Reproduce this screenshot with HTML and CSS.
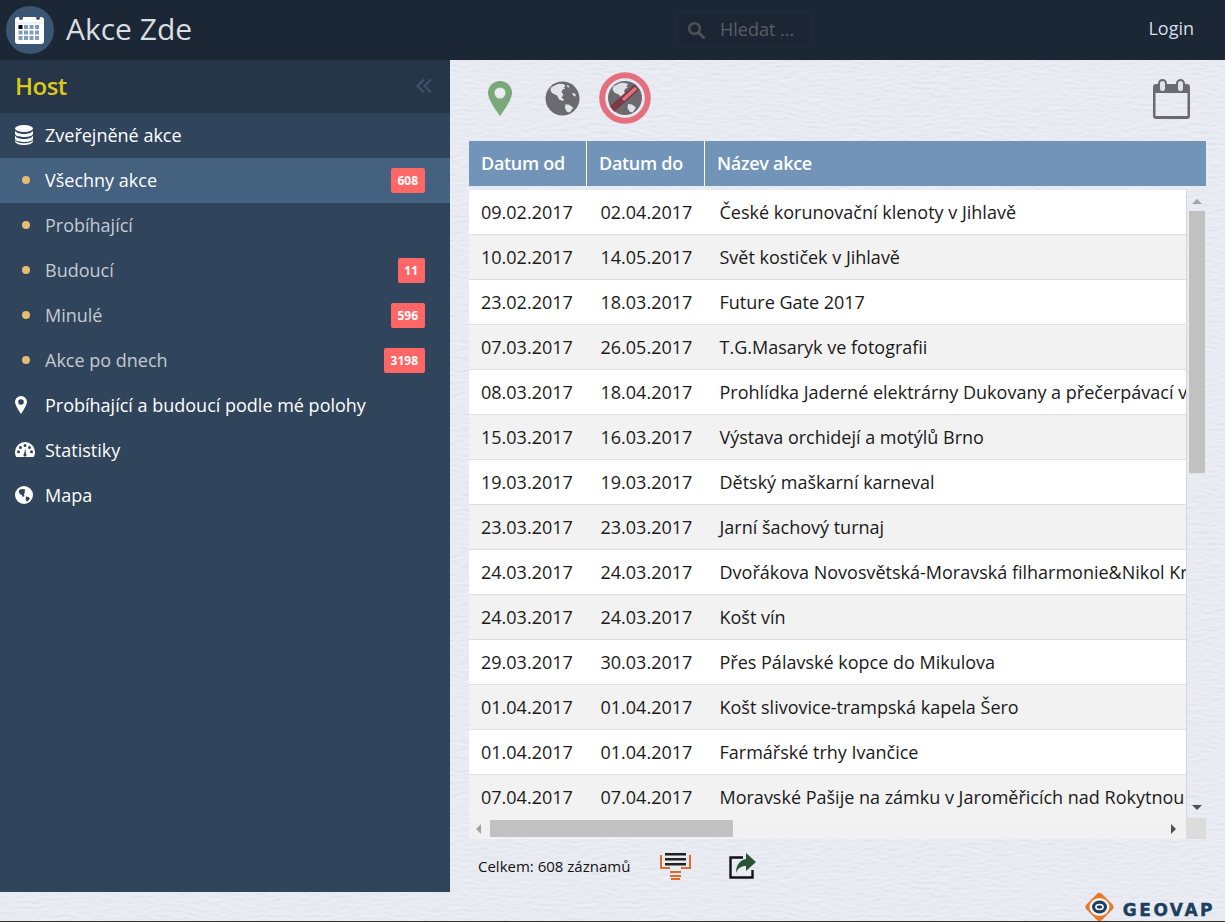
FILE: index.html
```html
<!DOCTYPE html>
<html lang="cs">
<head>
<meta charset="utf-8">
<title>Akce Zde</title>
<link rel="stylesheet" href="styles.css">
</head>
<body>
<header class="topbar">
  <div class="brand">
    <span class="brand-logo">
      <svg width="32" height="32" viewBox="0 0 32 32">
        <rect x="1" y="3" width="29" height="27" rx="3" fill="#fff"/>
        <path d="M1 9h29" stroke="#dfe4ea" stroke-width="1"/>
        <circle cx="7" cy="4" r="2" fill="#3b5673"/><circle cx="24" cy="4" r="2" fill="#3b5673"/>
        <rect x="6.500" y="1" width="1" height="4" fill="#3b5673"/><rect x="23.500" y="1" width="1" height="4" fill="#3b5673"/>
        <g fill="#7e9dbd">
          <rect x="10" y="11" width="4" height="4"/><rect x="15.500" y="11" width="4" height="4"/><rect x="21" y="11" width="4" height="4"/>
          <rect x="4.500" y="16.500" width="4" height="4"/><rect x="10" y="16.500" width="4" height="4"/><rect x="15.500" y="16.500" width="4" height="4"/><rect x="21" y="16.500" width="4" height="4"/>
          <rect x="4.500" y="22" width="4" height="4"/><rect x="10" y="22" width="4" height="4"/><rect x="15.500" y="22" width="4" height="4"/><rect x="21" y="22" width="4" height="4"/>
        </g>
        <rect x="4.500" y="11" width="4" height="4" fill="#000"/>
      </svg>
    </span>
    <span class="brand-name">Akce Zde</span>
  </div>
  <div class="search">
    <svg class="search-icon" width="18" height="18" viewBox="0 0 18 18"><circle cx="7.500" cy="7.500" r="5.300" fill="none" stroke="#4d5155" stroke-width="2.600"/><path d="M11.500 11.500l5 5" stroke="#4d5155" stroke-width="3" stroke-linecap="round"/></svg>
    <span class="search-text">Hledat ...</span>
  </div>
  <a class="login">Login</a>
</header>

<div class="shell">
  <aside class="sidebar">
    <div class="side-head">
      <span class="side-title">Host</span>
      <svg width="18" height="16" viewBox="0 0 18 16"><path d="M9 1.500L2.500 8 9 14.500M16 1.500L9.500 8 16 14.500" fill="none" stroke="#3f5069" stroke-width="2.200"/></svg>
    </div>
    <nav class="menu">
      <div class="item top">
        <span class="ico"><svg width="18" height="20" viewBox="0 0 18 20"><g fill="#fff"><ellipse cx="9" cy="3.500" rx="9" ry="3.500"/><path d="M0 5.500C1 8 5 9 9 9s8-1 9-3.500V9c-1 2.200-5 3-9 3S1 11.200 0 9z"/><path d="M0 10.500C1 13 5 14 9 14s8-1 9-3.500V14c-1 2.200-5 3-9 3s-8-.8-9-3z"/><path d="M0 15c1 2.500 5 3.200 9 3.200S17 17.500 18 15v1.500c-1 2.500-5 3.500-9 3.500s-8-1-9-3.500z"/></g></svg></span>
        <span class="label">Zveřejněné akce</span>
      </div>
      <div class="item sub active"><span class="ico"><i class="dot"></i></span><span class="label">Všechny akce</span><span class="badge">608</span></div>
      <div class="item sub"><span class="ico"><i class="dot"></i></span><span class="label">Probíhající</span></div>
      <div class="item sub"><span class="ico"><i class="dot"></i></span><span class="label">Budoucí</span><span class="badge">11</span></div>
      <div class="item sub"><span class="ico"><i class="dot"></i></span><span class="label">Minulé</span><span class="badge">596</span></div>
      <div class="item sub"><span class="ico"><i class="dot"></i></span><span class="label">Akce po dnech</span><span class="badge">3198</span></div>
      <div class="item top">
        <span class="ico"><svg width="12" height="18" viewBox="0 0 12 18"><path fill="#fff" fill-rule="evenodd" d="M6 0a6 6 0 0 1 6 6c0 2.300-3.500 8.500-6 12C3.500 14.500 0 8.300 0 6a6 6 0 0 1 6-6zm0 3.200a2.800 2.800 0 1 0 0 5.600 2.800 2.800 0 0 0 0-5.600z"/></svg></span>
        <span class="label">Probíhající a budoucí podle mé polohy</span>
      </div>
      <div class="item top">
        <span class="ico"><svg width="20" height="17" viewBox="0 0 20 17"><path fill="#fff" d="M10 1a10 10 0 0 1 10 10c0 2-.5 3.700-1.400 5H1.400C.5 14.700 0 13 0 11A10 10 0 0 1 10 1z"/><g fill="#30445c"><circle cx="10" cy="4.500" r="1.500"/><circle cx="5.500" cy="6.500" r="1.500"/><circle cx="3.500" cy="10.800" r="1.500"/><circle cx="16.500" cy="10.800" r="1.500"/><circle cx="14.500" cy="6.500" r="1.500"/><path d="M9 14l1.200-7 1 7z"/><circle cx="10" cy="14" r="1.600"/></g></svg></span>
        <span class="label">Statistiky</span>
      </div>
      <div class="item top">
        <span class="ico"><svg width="18" height="18" viewBox="0 0 18 18"><circle cx="9" cy="9" r="9" fill="#fff"/><path fill="#30445c" d="M5 3.500c2-.8 3.500-.6 5 0 .8.700 0 1.500-.6 1.600l.6 1.400-1 1.500.4 1.800-1.600 1.400L7 9 5 8.200 3.800 6 4 4.500zM11 10.500l2.500.5 1.500 1.500-2.500 3-1.500-.6-.3-2.400z"/></svg></span>
        <span class="label">Mapa</span>
      </div>
    </nav>
  </aside>

  <main class="content">
    <div class="toolbar">
      <div class="tools">
        <span class="tool">
          <svg width="24" height="35" viewBox="0 0 24 35"><path fill="#7aa878" fill-rule="evenodd" d="M12 0a12 12 0 0 1 12 12c0 6-7.500 17-12 23C7.500 29 0 18 0 12A12 12 0 0 1 12 0zm0 6.500a5.500 5.500 0 1 0 0 11 5.500 5.500 0 0 0 0-11z"/></svg>
        </span>
        <span class="tool">
          <svg width="35" height="35" viewBox="0 0 36 36"><circle cx="18" cy="18" r="17.500" fill="#6b6b6f"/><path fill="#e2e4ea" d="M11 4c3-1.500 6-1.500 9-.5 1.500 1 .5 2.500-1 3l2 1-3 1.500-1 2.500 2 2.500-2 3.500 2.500 1-1 2-4-1.500-2-4-5-2.500-2-3 1-3zM22 4l3 1-1 2.500zM21 24l4 .5 4 3-3.500 5-3-1-2-3.500zM28 12l3 1 1 3-3-1z"/></svg>
        </span>
        <span class="tool tool-off">
          <svg width="52" height="52" viewBox="0 0 52 52"><circle cx="26" cy="26" r="22.800" fill="none" stroke="#e4707f" stroke-width="6"/><circle cx="26" cy="26" r="17" fill="#6b6b6f"/><path fill="#dfe1e8" d="M19 12c3-1.500 6-1.500 9-.5 1.500 1 .5 2.500-1 3l2 1-3 1.500-1 2.500 2 2.500-2 3.500 2.500 1-1 2-4-1.500-2-4-5-2.500-2-3 1-3zM29 32l4 .5 4 3-3.500 5-3-1-2-3.500z"/><path d="M13 37L38 15" stroke="#7c3a47" stroke-width="7"/><path d="M24 28L37 16" stroke="#e4707f" stroke-width="3.500"/></svg>
        </span>
      </div>
      <span class="tool-cal">
        <svg width="37" height="40" viewBox="0 0 37 40"><path fill="#6b6b6f" fill-rule="evenodd" d="M3 5h31a3 3 0 0 1 3 3v29a3 3 0 0 1-3 3H3a3 3 0 0 1-3-3V8a3 3 0 0 1 3-3zm-.500 9v23h32V14z"/><rect x="6" y="1" width="7" height="12" rx="3.500" fill="#e0e2ea" stroke="#6b6b6f" stroke-width="2"/><rect x="24" y="1" width="7" height="12" rx="3.500" fill="#e0e2ea" stroke="#6b6b6f" stroke-width="2"/></svg>
      </span>
    </div>

    <div class="thead">
      <div class="th th-a">Datum od</div>
      <div class="th th-b">Datum do</div>
      <div class="th th-c">Název akce</div>
    </div>

    <div class="grid">
      <div class="grid-main">
        <div class="rows">
          <div class="row"><span class="c1">09.02.2017</span><span class="c2">02.04.2017</span><span class="c3">České korunovační klenoty v Jihlavě</span></div>
          <div class="row"><span class="c1">10.02.2017</span><span class="c2">14.05.2017</span><span class="c3">Svět kostiček v Jihlavě</span></div>
          <div class="row"><span class="c1">23.02.2017</span><span class="c2">18.03.2017</span><span class="c3">Future Gate 2017</span></div>
          <div class="row"><span class="c1">07.03.2017</span><span class="c2">26.05.2017</span><span class="c3">T.G.Masaryk ve fotografii</span></div>
          <div class="row"><span class="c1">08.03.2017</span><span class="c2">18.04.2017</span><span class="c3">Prohlídka Jaderné elektrárny Dukovany a přečerpávací vodní elektrárny Dalešice</span></div>
          <div class="row"><span class="c1">15.03.2017</span><span class="c2">16.03.2017</span><span class="c3">Výstava orchidejí a motýlů Brno</span></div>
          <div class="row"><span class="c1">19.03.2017</span><span class="c2">19.03.2017</span><span class="c3">Dětský maškarní karneval</span></div>
          <div class="row"><span class="c1">23.03.2017</span><span class="c2">23.03.2017</span><span class="c3">Jarní šachový turnaj</span></div>
          <div class="row"><span class="c1">24.03.2017</span><span class="c2">24.03.2017</span><span class="c3">Dvořákova Novosvětská-Moravská filharmonie&amp;Nikol Kroupová</span></div>
          <div class="row"><span class="c1">24.03.2017</span><span class="c2">24.03.2017</span><span class="c3">Košt vín</span></div>
          <div class="row"><span class="c1">29.03.2017</span><span class="c2">30.03.2017</span><span class="c3">Přes Pálavské kopce do Mikulova</span></div>
          <div class="row"><span class="c1">01.04.2017</span><span class="c2">01.04.2017</span><span class="c3">Košt slivovice-trampská kapela Šero</span></div>
          <div class="row"><span class="c1">01.04.2017</span><span class="c2">01.04.2017</span><span class="c3">Farmářské trhy Ivančice</span></div>
          <div class="row"><span class="c1">07.04.2017</span><span class="c2">07.04.2017</span><span class="c3">Moravské Pašije na zámku v Jaroměřicích nad Rokytnou</span></div>
        </div>
        <div class="vbar">
          <i class="arrow up"></i>
          <div class="vtrack"><div class="vthumb"></div></div>
          <i class="arrow down"></i>
        </div>
      </div>
      <div class="grid-foot">
        <div class="hbar">
          <i class="arrow left"></i>
          <div class="htrack"><div class="hthumb"></div></div>
          <i class="arrow right"></i>
        </div>
        <div class="corner"></div>
      </div>
    </div>

    <div class="summary">
      <span class="total">Celkem: 608 záznamů</span>
      <svg class="sum-list" width="31" height="28" viewBox="0 0 31 28"><g fill="#e06a28"><path d="M0 3h2v12h8v2H0zM29 3h2v14H21v-2h8z"/><rect x="10" y="19" width="11" height="2"/><rect x="10" y="23" width="11" height="2"/><rect x="11" y="26" width="9" height="2"/></g><g fill="#222"><rect x="5" y="1" width="21" height="2.500"/><rect x="5" y="6" width="21" height="2.500"/><rect x="5" y="11" width="21" height="2.500"/></g></svg>
      <svg class="sum-share" width="28" height="26" viewBox="0 0 28 26"><path fill="none" stroke="#111" stroke-width="2.400" d="M14 4.500H1.500v20h22V17"/><path fill="#2c5235" d="M17 0l10 9-10 9v-5c-5 0-8 2-10 7 0-8 4-13 10-14z"/></svg>
    </div>
  </main>
</div>

<footer class="footer">
  <svg width="31" height="30" viewBox="0 0 31 30"><g transform="rotate(45 15.500 15)"><rect x="4.500" y="4" width="22" height="22" rx="4" fill="#e8792a"/></g><ellipse cx="15.500" cy="15" rx="10" ry="9" fill="#f4f5f8"/><ellipse cx="15.500" cy="15" rx="7.500" ry="6.500" fill="#1d3f5e"/><ellipse cx="15.500" cy="15" rx="3.600" ry="2.500" fill="none" stroke="#fff" stroke-width="1.500"/></svg>
  <span class="geovap">GEOVAP</span>
</footer>
</body>
</html>
```
FILE: styles.css
```css
* { box-sizing: border-box; }
html, body { margin: 0; height: 100%; }
body {
  width: 1225px;
  height: 922px;
  overflow: hidden;
  display: flex;
  flex-direction: column;
  font-family: "Open Sans", "Noto Sans", sans-serif;
  background-color: #e0e2ea;
  background-image: url("data:image/svg+xml,%3Csvg xmlns='http://www.w3.org/2000/svg' width='600' height='400'%3E%3Cfilter id='f' x='0' y='0' width='100%25' height='100%25'%3E%3CfeTurbulence type='fractalNoise' baseFrequency='0.1 0.36' numOctaves='2' seed='4' stitchTiles='stitch'/%3E%3CfeDiffuseLighting surfaceScale='0.38' diffuseConstant='1' lighting-color='%23eff1f9'%3E%3CfeDistantLight azimuth='90' elevation='70'/%3E%3C/feDiffuseLighting%3E%3C/filter%3E%3Crect width='600' height='400' filter='url(%23f)'/%3E%3C/svg%3E");
  border-bottom: 1px solid #333;
}

/* top bar */
.topbar {
  height: 60px;
  flex: none;
  display: grid;
  grid-template-columns: 669px 138px 1fr;
  align-items: center;
  background: #1c2735;
  padding: 0 31px 0 6px;
}
.brand { display: flex; align-items: center; gap: 12px; }
.brand-logo {
  width: 48px; height: 48px; border-radius: 50%;
  background: #3b5673;
  display: flex; align-items: center; justify-content: center;
}
.brand-name { font-size: 30px; color: #dadde2; line-height: 1; padding-bottom: 2px; }
.search {
  height: 35px;
  margin-top: -1px;
  background: #1b2533;
  border: 1px solid #212c3a;
  border-radius: 3px;
  display: flex; align-items: center;
  padding-left: 11px;
  gap: 14px;
}
.search-text { font-size: 18px; color: #5a5e63; padding-bottom: 1px; padding-left: 1px; }
.login { justify-self: end; color: #d6dde6; font-size: 18px; padding-bottom: 4px; }

/* shell */
.shell { flex: none; height: 832px; display: flex; }

.sidebar { width: 450px; flex: none; background: #30445c; }
.side-head {
  height: 53px;
  background: #263547;
  display: flex; align-items: center; justify-content: space-between;
  padding: 0 17px 2px 15px;
}
.side-title { color: #dcc91b; font-size: 24px; font-weight: 600; letter-spacing: -0.5px; }
.item {
  height: 45px;
  display: flex; align-items: center;
  padding: 0 25px 2px 0;
  font-size: 18px;
}
.item.top { color: #fff; }
.item.sub { color: #c3cad2; }
.item.active { background: #44617f; color: #fff; }
.ico { width: 45px; flex: none; display: flex; align-items: center; padding-left: 15px; }
.sub .ico { padding-left: 22px; }
.dot { width: 8px; height: 8px; border-radius: 50%; background: #e6bc72; }
.label { flex: 1; }
.badge {
  background: #ff6666;
  color: #fff;
  border-radius: 2px;
  font-size: 12px;
  font-weight: 700;
  height: 25px;
  line-height: 25px;
  padding: 0 7px 0 6.500px;
  margin-top: 2px;
}

/* content */
.content { flex: 1; min-width: 0; padding: 0 19px; }
.toolbar {
  height: 81px;
  display: flex; align-items: center; justify-content: space-between;
  padding: 0 16px 0 0;
}
.tools { display: flex; align-items: center; margin-top: -6px; }
.tool { display: flex; justify-content: center; }
.tools .tool:nth-child(1) { width: 24px; margin-left: 19px; margin-top: 2px; }
.tools .tool:nth-child(2) { margin-left: 33px; margin-top: 2px; }
.tools .tool:nth-child(3) { margin-left: 19px; }
.tool-cal { display: flex; margin-top: -3px; }
.thead { display: flex; height: 45px; background: #7194b8; color: #fff; font-weight: 600; font-size: 18px; letter-spacing: -0.3px; }
.th { display: flex; align-items: center; padding: 0 0 2px 12px; border-right: 1px solid #fff; }
.th-a { width: 118px; }
.th-b { width: 118px; }
.th-c { flex: 1; border-right: 0; }

.grid { margin-top: 4px; width: 737px; }
.grid-main { display: flex; height: 630px; }
.rows { width: 717px; background: #fff; overflow: hidden; flex: none; }
.row {
  height: 45px;
  display: flex; align-items: center;
  border-bottom: 1px solid #dedede;
  font-size: 18px;
  color: #1a1a1a;
  white-space: nowrap;
}
.row:nth-child(even) { background: #f2f2f2; }
.row:last-child { border-bottom-color: #f2f2f2; }
.c1 { width: 131.500px; padding-left: 12px; flex: none; }
.c2 { width: 119px; flex: none; }
.c3 { flex: none; }

.vbar { width: 20px; border-left: 1px solid #d6d7dc; padding: 0 1px 0 2px; display: flex; flex-direction: column; align-items: center; }
.vtrack { flex: 1; width: 100%; }
.vthumb { height: 262px; background: #c1c1c1; }
.arrow { display: block; width: 0; height: 0; flex: none; }
.arrow.up { border: 5px solid transparent; border-top: 0; border-bottom: 5px solid #a3a3a3; margin: 9px 0 7px; }
.arrow.down { border: 5px solid transparent; border-bottom: 0; border-top: 5px solid #505050; margin: 6px 0 10px; }
.grid-foot { display: flex; height: 19px; }
.hbar { width: 717px; background: #f1f1f1; display: flex; align-items: center; padding-bottom: 2px; }
.htrack { flex: 1; height: 17px; }
.hthumb { width: 243px; height: 17px; background: #c1c1c1; }
.arrow.left { border: 5px solid transparent; border-left: 0; border-right: 5px solid #a3a3a3; margin: 0 9px 0 7px; }
.arrow.right { border: 5px solid transparent; border-right: 0; border-left: 5px solid #505050; margin: 0 10px 0 7px; }
.corner { width: 20px; background: #dcdcdc; margin-top: -2px; }

.summary { height: 53px; display: flex; align-items: center; padding-left: 9px; }
.total { font-size: 15px; color: #111; width: 182px; }
.sum-share { margin-left: 38px; }

/* footer */
.footer {
  flex: 1;
  display: flex; align-items: center; justify-content: flex-end;
  padding: 0 12px 0 0;
  gap: 8px;
}
.geovap { font-family: "DejaVu Sans", sans-serif; font-weight: 700; font-size: 17px; color: #1d3f5e; letter-spacing: 2.500px; margin: 5px -2px 0 0; -webkit-text-stroke: 0.4px #1d3f5e; }
```
